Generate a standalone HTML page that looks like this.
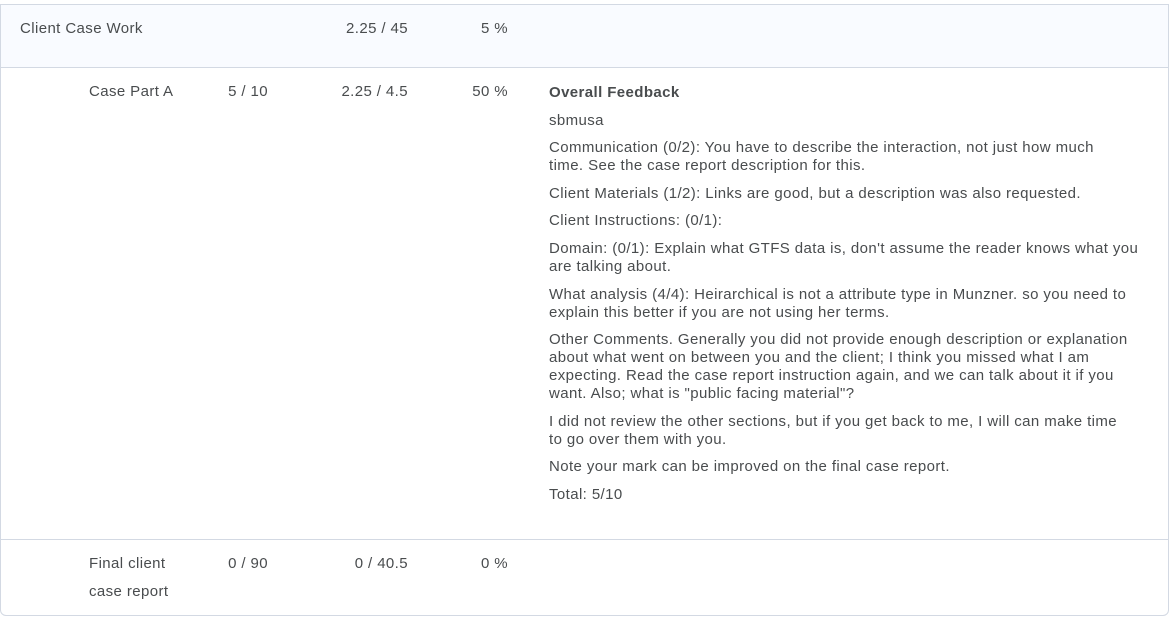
<!DOCTYPE html>
<html><head><style>
body{margin:0;background:#fff;font-family:"Liberation Sans",sans-serif;color:#494c4e;font-size:15px;letter-spacing:0.4px;}
.t{position:absolute;left:0;top:4px;width:1167px;height:610px;border:1px solid #d3d9e3;border-radius:0 0 6px 6px;}
.r1{position:absolute;left:0;top:0;width:1167px;height:62px;background:#f9fbff;border-bottom:1px solid #d3d9e3;}
.r3{position:absolute;left:0;top:534px;width:1167px;border-top:1px solid #d3d9e3;}
.a{position:absolute;white-space:nowrap;line-height:18px;}
.rt{text-align:right;}
.fb{position:absolute;left:549px;top:84px;width:615px;}
.fb p{margin:0 0 9.6px;line-height:18px;white-space:nowrap;}
</style></head><body>
<div class="t">
<div class="r1"></div>
<div class="r3"></div>
</div>
<div class="a" style="left:20px;top:20px">Client Case Work</div>
<div class="a rt" style="right:761px;top:20px">2.25 / 45</div>
<div class="a rt" style="right:661px;top:20px">5 %</div>

<div class="a" style="left:89px;top:83px">Case Part A</div>
<div class="a rt" style="right:901px;top:83px">5 / 10</div>
<div class="a rt" style="right:761px;top:83px">2.25 / 4.5</div>
<div class="a rt" style="right:661px;top:83px">50 %</div>
<div class="fb">
<p style="font-weight:bold">Overall Feedback</p>
<p>sbmusa</p>
<p>Communication (0/2): You have to describe the interaction, not just how much<br>time. See the case report description for this.</p>
<p>Client Materials (1/2): Links are good, but a description was also requested.</p>
<p>Client Instructions: (0/1):</p>
<p>Domain: (0/1): Explain what GTFS data is, don't assume the reader knows what you<br>are talking about.</p>
<p>What analysis (4/4): Heirarchical is not a attribute type in Munzner. so you need to<br>explain this better if you are not using her terms.</p>
<p>Other Comments. Generally you did not provide enough description or explanation<br>about what went on between you and the client; I think you missed what I am<br>expecting. Read the case report instruction again, and we can talk about it if you<br>want. Also; what is "public facing material"?</p>
<p>I did not review the other sections, but if you get back to me, I will can make time<br>to go over them with you.</p>
<p>Note your mark can be improved on the final case report.</p>
<p>Total: 5/10</p>
</div>

<div class="a" style="left:89px;top:550px;line-height:28px">Final client<br>case report</div>
<div class="a rt" style="right:901px;top:555px">0 / 90</div>
<div class="a rt" style="right:761px;top:555px">0 / 40.5</div>
<div class="a rt" style="right:661px;top:555px">0 %</div>
</body></html>
